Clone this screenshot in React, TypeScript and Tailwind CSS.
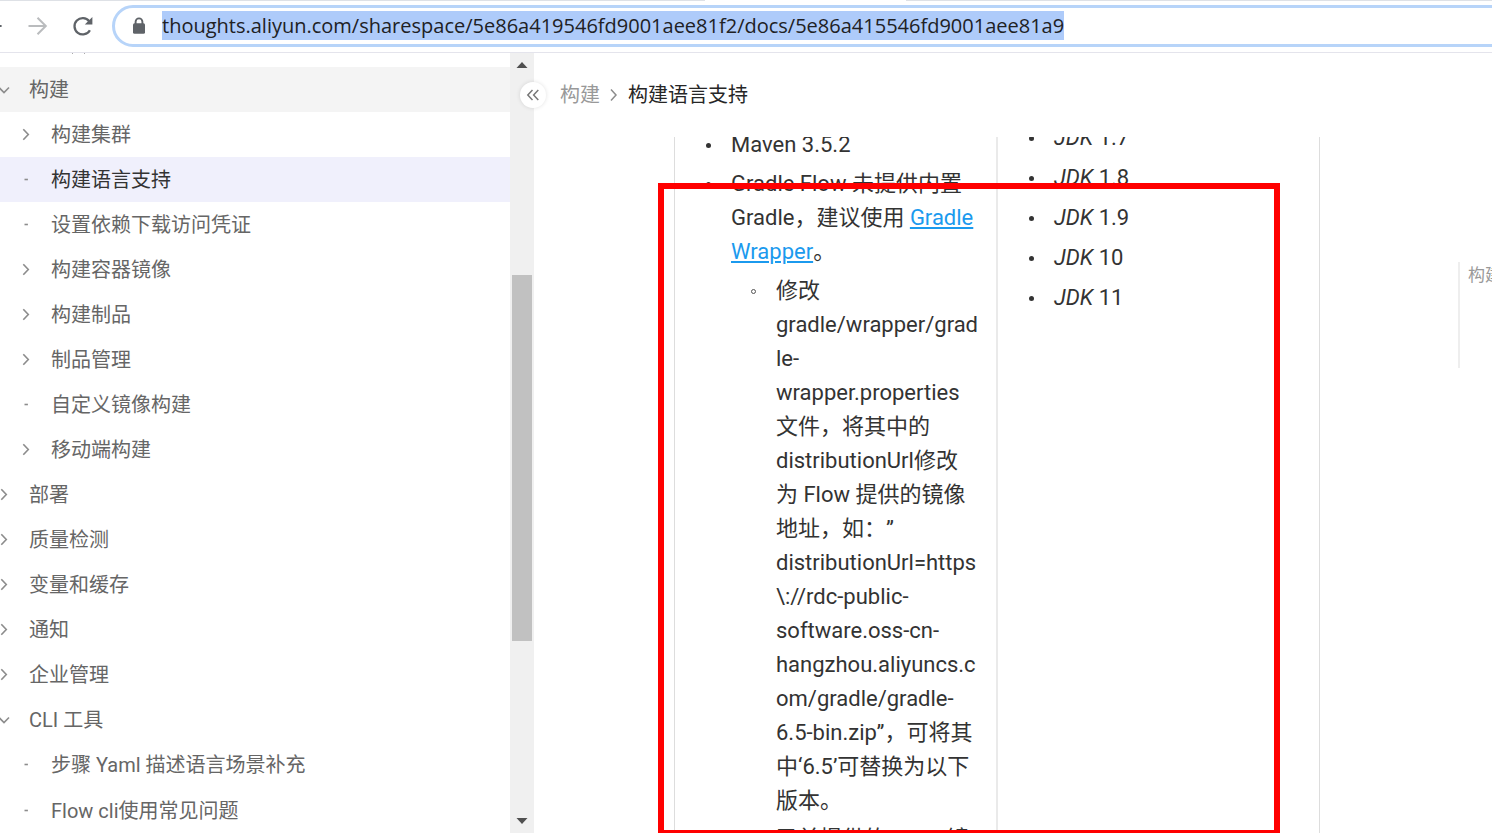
import type { ReactNode } from "react";

type NavItem = {
  label: string;
  level: 1 | 2;
  kind: "open" | "closed" | "leaf";
  state?: "section" | "active";
};

const navItems: NavItem[] = [
  { label: "构建", level: 1, kind: "open", state: "section" },
  { label: "构建集群", level: 2, kind: "closed" },
  { label: "构建语言支持", level: 2, kind: "leaf", state: "active" },
  { label: "设置依赖下载访问凭证", level: 2, kind: "leaf" },
  { label: "构建容器镜像", level: 2, kind: "closed" },
  { label: "构建制品", level: 2, kind: "closed" },
  { label: "制品管理", level: 2, kind: "closed" },
  { label: "自定义镜像构建", level: 2, kind: "leaf" },
  { label: "移动端构建", level: 2, kind: "closed" },
  { label: "部署", level: 1, kind: "closed" },
  { label: "质量检测", level: 1, kind: "closed" },
  { label: "变量和缓存", level: 1, kind: "closed" },
  { label: "通知", level: 1, kind: "closed" },
  { label: "企业管理", level: 1, kind: "closed" },
  { label: "CLI 工具", level: 1, kind: "open" },
  { label: "步骤 Yaml 描述语言场景补充", level: 2, kind: "leaf" },
  { label: "Flow cli使用常见问题", level: 2, kind: "leaf" },
];

const jdkVersions = ["1.7", "1.8", "1.9", "10", "11"];

function NavMarker({ kind }: { kind: NavItem["kind"] }) {
  return (
    <svg viewBox="0 0 14 14" className="size-[14px] shrink-0" fill="none" stroke="#8c8c8c" strokeWidth="1.6">
      {kind === "open" && <path d="M2 4.5l5 5 5-5" />}
      {kind === "closed" && <path d="M4.3 1.2l5 5.3-5 5.3" />}
      {kind === "leaf" && <path d="M5.5 6.5h3.4" />}
    </svg>
  );
}

function NavRow({ item }: { item: NavItem }) {
  const indent = item.level === 1 ? "-ml-[3px]" : "ml-[19px]";
  const bg = item.state === "active" ? "bg-[#f0f0fc]" : item.state === "section" ? "bg-[#f4f4f4]" : "";
  const color = item.state === "active" ? "text-[#333]" : "text-[#666]";

  return (
    <li className={`flex min-h-0 flex-1 ${bg}`}>
      <a href="#" className={`flex flex-1 items-center gap-[18px] whitespace-nowrap text-[20px] ${indent} ${color}`}>
        <NavMarker kind={item.kind} />
        {item.label}
      </a>
    </li>
  );
}

function AddressBar() {
  return (
    <header className="flex h-[53px] shrink-0 flex-col border-b border-[#e4e4ec]">
      {/* bottom edge of the tab strip, open under the active tab */}
      <div className="flex h-px shrink-0">
        <div className="w-[705px] bg-[#dee1e6]" />
        <div className="w-[201px]" />
        <div className="flex-1 bg-[#dee1e6]" />
      </div>
      <div className="flex flex-1 items-center pb-0.5">
        <button aria-label="后退" className="w-[26px] shrink-0">
          <svg viewBox="0 0 26 22" className="h-[22px] w-[26px]" fill="none" stroke="#5f6368" strokeWidth="2">
            <path d="M-14 11H1.6" />
          </svg>
        </button>
        <button aria-label="前进" className="w-[24px] shrink-0">
          <svg viewBox="0 0 24 22" className="h-[22px] w-[24px]" fill="none" stroke="#babcbe" strokeWidth="2">
            <path d="M2.5 11h17M11.5 2.7l8.3 8.3-8.3 8.3" />
          </svg>
        </button>
        <button aria-label="重新加载" className="ml-[21px] w-[24px] shrink-0">
          <svg viewBox="0 0 24 22" className="h-[22px] w-[24px]">
            <path d="M18.9 15.2a8.2 8.2 0 1 1-.7-9" fill="none" stroke="#5f6368" strokeWidth="2.3" />
            <path d="M21.4 2v7.6h-7.6z" fill="#5f6368" />
          </svg>
        </button>
        <div className="-mr-8 ml-[17px] flex h-[42px] flex-1 items-center rounded-full border-[3px] border-[#b7d4f9] pl-[17px]">
          <svg viewBox="0 0 14 18" className="h-[18px] w-[14px] shrink-0">
            <path d="M3.6 7V4.8a3.4 3.4 0 0 1 6.8 0V7" fill="none" stroke="#5f6368" strokeWidth="1.9" />
            <rect x="1" y="6.2" width="12" height="10.6" rx="1.5" fill="#5f6368" />
          </svg>
          <input
            type="text"
            aria-label="地址"
            defaultValue="thoughts.aliyun.com/sharespace/5e86a419546fd9001aee81f2/docs/5e86a415546fd9001aee81a9"
            className="ml-4 field-sizing-content h-[29px] bg-[#aecbfa] font-['Open_Sans',sans-serif] text-[20px] text-[#202124] outline-none"
          />
        </div>
      </div>
    </header>
  );
}

function Scrollbar() {
  return (
    <div className="flex w-6 shrink-0 flex-col items-center bg-[#f0f0f0]">
      <svg viewBox="0 0 12 6" className="mt-[9px] h-[6px] w-3 shrink-0">
        <path d="M6 0l5.5 6H.5z" fill="#505050" />
      </svg>
      <div className="flex w-5 flex-1 flex-col">
        <div className="flex-[207]" />
        <div className="flex-[366] bg-[#c1c1c1]" />
        <div className="flex-[177]" />
      </div>
      <svg viewBox="0 0 12 6" className="mb-[9px] h-[6px] w-3 shrink-0">
        <path d="M6 6L.5 0h11z" fill="#505050" />
      </svg>
    </div>
  );
}

function Bullet({ ring, children }: { ring?: boolean; children: ReactNode }) {
  return (
    <li className="flex items-start gap-5">
      <span
        className={
          ring
            ? "mt-[15px] size-[5px] shrink-0 rounded-full border border-[#555]"
            : "mt-[15px] size-[5px] shrink-0 rounded-full bg-[#333]"
        }
      />
      <div>{children}</div>
    </li>
  );
}

function SupportTable() {
  return (
    <table className="-mt-4 w-[646px] shrink-0 table-fixed border-x border-[#ddd] text-[22px] leading-[34px] whitespace-nowrap text-[#333] [text-spacing-trim:space-all]">
      <tbody>
        <tr className="align-top">
          <td className="border-r-2 border-[#eaeaea] pt-[7px] pl-[31px]">
            <ul className="flex flex-col gap-[5px]">
              <Bullet>Maven 3.5.2</Bullet>
              <Bullet>
                Gradle Flow 未提供内置
                <br />
                Gradle，建议使用{" "}
                <a href="#" className="text-[#1b9aee] underline">
                  Gradle
                  <br />
                  Wrapper
                </a>
                。
                <ul className="mt-[5px] flex flex-col gap-1 pl-5">
                  <Bullet ring>
                    修改
                    <br />
                    gradle/wrapper/grad
                    <br />
                    le-
                    <br />
                    wrapper.properties
                    <br />
                    文件，将其中的
                    <br />
                    distributionUrl修改
                    <br />
                    为 Flow 提供的镜像
                    <br />
                    地址，如：”
                    <br />
                    distributionUrl=https
                    <br />
                    \://rdc-public-
                    <br />
                    software.oss-cn-
                    <br />
                    hangzhou.aliyuncs.c
                    <br />
                    om/gradle/gradle-
                    <br />
                    6.5-bin.zip”，可将其
                    <br />
                    中‘6.5’可替换为以下
                    <br />
                    版本。
                  </Bullet>
                  <Bullet ring>已前提供的gradle镜</Bullet>
                </ul>
              </Bullet>
            </ul>
          </td>
          <td className="pl-[31px]">
            <ul className="flex flex-col gap-1.5">
              {jdkVersions.map((version) => (
                <Bullet key={version}>
                  <em>JDK</em> {version}
                </Bullet>
              ))}
            </ul>
          </td>
        </tr>
      </tbody>
    </table>
  );
}

export default function App() {
  return (
    <div lang="zh-CN" className="flex h-screen flex-col overflow-hidden bg-white font-[Roboto,'Noto_Sans_CJK_SC',sans-serif]">
      <AddressBar />

      <div className="flex min-h-0 flex-1">
        {/* Sidebar */}
        <nav className="flex w-[510px] shrink-0 flex-col">
          <div className="h-[14px] shrink-0">
            <svg viewBox="0 0 16 2" className="ml-[71px] h-[2px] w-4" fill="#aaa">
              <path d="M1 0h1v1H1zM13 0h1v1h-1z" />
            </svg>
          </div>
          <ul className="flex min-h-0 flex-1 flex-col">
            {navItems.map((item) => (
              <NavRow key={item.label} item={item} />
            ))}
          </ul>
        </nav>
        <Scrollbar />

        {/* Document */}
        <main className="relative flex min-w-0 flex-1 flex-col">
          <div className="flex h-[84px] shrink-0 items-center text-[20px]">
            <button
              aria-label="收起目录"
              className="-ml-[14px] flex size-[26px] items-center justify-center rounded-full bg-white shadow-[0_0_4px_rgba(0,0,0,0.12)]"
            >
              <svg viewBox="0 0 14 14" className="size-[14px]" fill="none" stroke="#777" strokeWidth="1.5">
                <path d="M6.5 2L1.8 7l4.7 5M12.3 2L7.6 7l4.7 5" />
              </svg>
            </button>
            <a href="#" className="ml-[14px] text-[#999]">
              构建
            </a>
            <svg viewBox="0 0 14 14" className="mx-[7px] size-[14px]" fill="none" stroke="#8c8c8c" strokeWidth="1.5">
              <path d="M4 1.5l5 5.5-5 5.5" />
            </svg>
            <span className="text-[#262626]">构建语言支持</span>
          </div>

          <div className="flex min-h-0 flex-1 justify-between overflow-hidden pl-[140px]">
            <SupportTable />
            <aside className="mt-[125px] h-[106px] w-[34px] shrink-0 overflow-hidden border-l-2 border-[#eee] pl-2 text-[17px] leading-[26px] whitespace-nowrap text-[#999]">
              <a href="#">构建语言支持</a>
            </aside>
          </div>

          {/* highlight frame drawn over the table */}
          <div className="pointer-events-none absolute top-[130px] -bottom-[3px] left-[124px] w-[622px] border-[6px] border-[#f00]" />
        </main>
      </div>
    </div>
  );
}
